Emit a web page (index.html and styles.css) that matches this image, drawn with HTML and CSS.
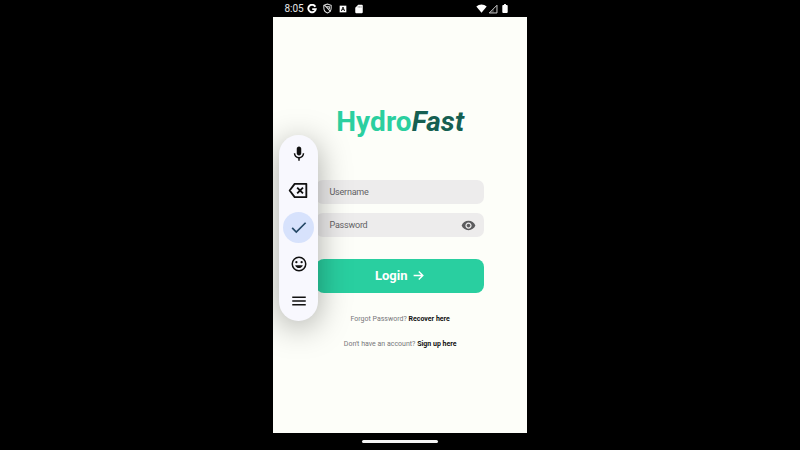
FILE: index.html
```html
<!DOCTYPE html>
<html lang="en">
<head>
<meta charset="utf-8">
<title>HydroFast</title>
<link rel="stylesheet" href="styles.css">
</head>
<body>
<main class="phone">
  <header class="status">
    <span class="clock">8:05</span>
    <svg class="google" viewBox="0 0 24 24"><path d="M20 6.5A9 9 0 1 0 21 12.2H12.5" fill="none" stroke="#fff" stroke-width="4.6"/></svg>
    <svg class="shield" viewBox="0 0 24 24"><path d="M12 2 4 5v6c0 5 3.4 9.300 8 11 4.600-1.700 8-6 8-11V5zM5 4l14 15M10 8h6v5" fill="none" stroke="#e4e4e4" stroke-width="2.200"/></svg>
    <svg class="appbox" viewBox="0 0 24 24"><path d="M2 2h20v20H2z" fill="#fff"/><path d="m7 18 5-12 5 12M9 14h6" fill="none" stroke="#000" stroke-width="2.600"/></svg>
    <svg class="sdcard" viewBox="0 0 24 24"><path d="M10 2h9q2 0 2 2v16q0 2-2 2H5q-2 0-2-2V9z" fill="#fff"/><path d="M10 5v4m3.500-4v4M17 5v4" stroke="#777" stroke-width="1.500"/></svg>
    <span class="spacer"></span>
    <svg class="wifi" viewBox="0 0 24 20"><path d="M12 19.500 0.500 5.500C7-.5 17-.5 23.500 5.500z" fill="#fff"/></svg>
    <svg class="signal" viewBox="0 0 24 24"><path d="M3 21.500 21.500 3v18.500z" fill="none" stroke="#ddd" stroke-width="2.200"/><path d="M14 11v10H4z" fill="#aaa" opacity=".35"/></svg>
    <svg class="battery" viewBox="0 0 12 20"><path d="M4 0h4v2h2q2 0 2 2v14q0 2-2 2H2q-2 0-2-2V4q0-2 2-2h2z" fill="#fff"/></svg>
  </header>
  <section class="screen">
    <h1 class="brand">Hydro<em>Fast</em></h1>
    <div class="field">Username</div>
    <div class="field">Password
      <svg class="eye" viewBox="0 0 24 24"><path fill="#5c5c5e" d="M12 4.500C7 4.500 2.730 7.610 1 12c1.730 4.390 6 7.500 11 7.500s9.270-3.110 11-7.500c-1.730-4.390-6-7.500-11-7.500zM12 17c-2.760 0-5-2.240-5-5s2.240-5 5-5 5 2.240 5 5-2.240 5-5 5zm0-8c-1.660 0-3 1.340-3 3s1.340 3 3 3 3-1.340 3-3-1.340-3-3-3z"/></svg>
    </div>
    <div class="login">Login
      <svg class="arrow" viewBox="0 0 24 24"><path d="M3 12h17M12.500 4.500 20 12l-7.500 7.500" fill="none" stroke="#fff" stroke-width="2.600"/></svg>
    </div>
    <p class="hint">Forgot Password? <b>Recover here</b></p>
    <p class="hint">Don't have an account? <b>Sign up here</b></p>
    <nav class="toolbar">
      <span class="tool"><svg viewBox="0 0 24 24"><path fill="#111" d="M12 14c1.660 0 3-1.340 3-3V5c0-1.660-1.340-3-3-3S9 3.340 9 5v6c0 1.660 1.340 3 3 3zm5-3c0 2.760-2.240 5-5 5s-5-2.240-5-5H5c0 3.530 2.610 6.430 6 6.920V21h2v-3.080c3.390-.49 6-3.390 6-6.920z"/></svg></span>
      <span class="tool"><svg class="delete" viewBox="0 0 24 20"><path d="M8 2h14v16H8L2 10zM11 6.500l7 7m0-7-7 7" fill="none" stroke="#111" stroke-width="2.200" stroke-linejoin="round"/></svg></span>
      <span class="tool active"><svg class="check" viewBox="0 0 24 24"><path d="m4 12.500 5.200 5.200L21 6" fill="none" stroke="#244866" stroke-width="2.200"/></svg></span>
      <span class="tool"><svg viewBox="0 0 24 24"><circle cx="12" cy="12" r="9" fill="none" stroke="#111" stroke-width="2"/><circle cx="8.500" cy="9.500" r="1.500" fill="#111"/><circle cx="15.500" cy="9.500" r="1.500" fill="#111"/><path d="M6.900 13.500h10.200c-.8 2.300-2.700 3.900-5.100 3.900s-4.300-1.600-5.100-3.900z" fill="#111"/></svg></span>
      <span class="tool"><svg viewBox="0 0 24 24"><path d="M3 7h18M3 12h18M3 17h18" stroke="#111" stroke-width="2.200"/></svg></span>
    </nav>
  </section>
  <footer class="home"><span class="handle"></span></footer>
</main>
</body>
</html>
```
FILE: styles.css
```css
* { box-sizing: border-box; }
body {
  margin: 0;
  background: #000;
  font-family: Roboto, sans-serif;
}
svg { display: block; flex: none; }
.phone {
  width: 253.200px;
  height: 450px;
  margin-left: 273.400px;
  display: flex;
  flex-direction: column;
}
.status {
  height: 17px;
  flex: none;
  display: flex;
  align-items: center;
  padding: 0 18.600px 0 11px;
}
.clock {
  width: 22.600px;
  color: #e8e8e8;
  font-size: 10px;
  line-height: 17px;
}
.google { width: 10px; height: 10px; }
.shield { width: 11px; height: 11px; margin-left: 5px; }
.appbox { width: 8px; height: 8px; margin-left: 6px; }
.sdcard { width: 10px; height: 10px; margin-left: 7px; }
.spacer { flex: 1; }
.wifi { width: 11px; height: 9px; }
.signal { width: 10px; height: 10px; margin-left: 1px; }
.battery { width: 6px; height: 9px; margin-left: 4px; }
.screen {
  position: relative;
  height: 416px;
  flex: none;
  overflow: hidden;
  padding: 85px 42.200px 0 42.600px;
  background: #fdfef9;
}
.brand {
  margin: 0 -20px 58px;
  color: #2bcf9f;
  font-size: 28px;
  line-height: 40px;
  font-weight: 700;
  text-align: center;
  letter-spacing: 0.080px;
  height: 20px;
}
.brand em { color: #155f52; }
.field {
  height: 23.500px;
  margin-bottom: 9.500px;
  padding: 0 8px 0 13.500px;
  display: flex;
  align-items: center;
  justify-content: space-between;
  border-radius: 7px;
  background: #edecec;
  color: #626264;
  font-size: 9px;
  letter-spacing: -0.220px;
}
.eye { width: 15px; height: 15px; margin-top: 1px; }
.login {
  height: 34px;
  margin: 22px 0 20.500px;
  display: flex;
  align-items: center;
  justify-content: center;
  gap: 5px;
  border-radius: 8px;
  background: #29cfa0;
  color: #fff;
  font-size: 13px;
  font-weight: 700;
}
.arrow { width: 13px; height: 13px; }
.hint {
  margin: 0 -10px 13px;
  color: #77777a;
  font-size: 7px;
  line-height: 12px;
  text-align: center;
}
.hint b { color: #111; }
.toolbar {
  position: absolute;
  left: 5.500px;
  top: 118px;
  width: 39.500px;
  height: 186px;
  padding: 3px 0 5px;
  display: flex;
  flex-direction: column;
  align-items: center;
  justify-content: space-between;
  border-radius: 20px;
  background: #f8f8fe;
  box-shadow: 0 6px 32px rgba(0, 0, 0, .34);
}
.tool {
  width: 31px;
  height: 31px;
  display: flex;
  align-items: center;
  justify-content: center;
  border-radius: 50%;
}
.tool svg { width: 18px; height: 18px; }
.tool .delete { width: 20px; height: 17px; margin-right: 1px; }
.tool .check { width: 19px; height: 19px; }
.active { background: #d7e2fc; }
.home {
  height: 17px;
  display: flex;
  align-items: center;
  justify-content: center;
}
.handle {
  width: 76px;
  height: 2.500px;
  border-radius: 2px;
  background: #f4f4f4;
}
```
